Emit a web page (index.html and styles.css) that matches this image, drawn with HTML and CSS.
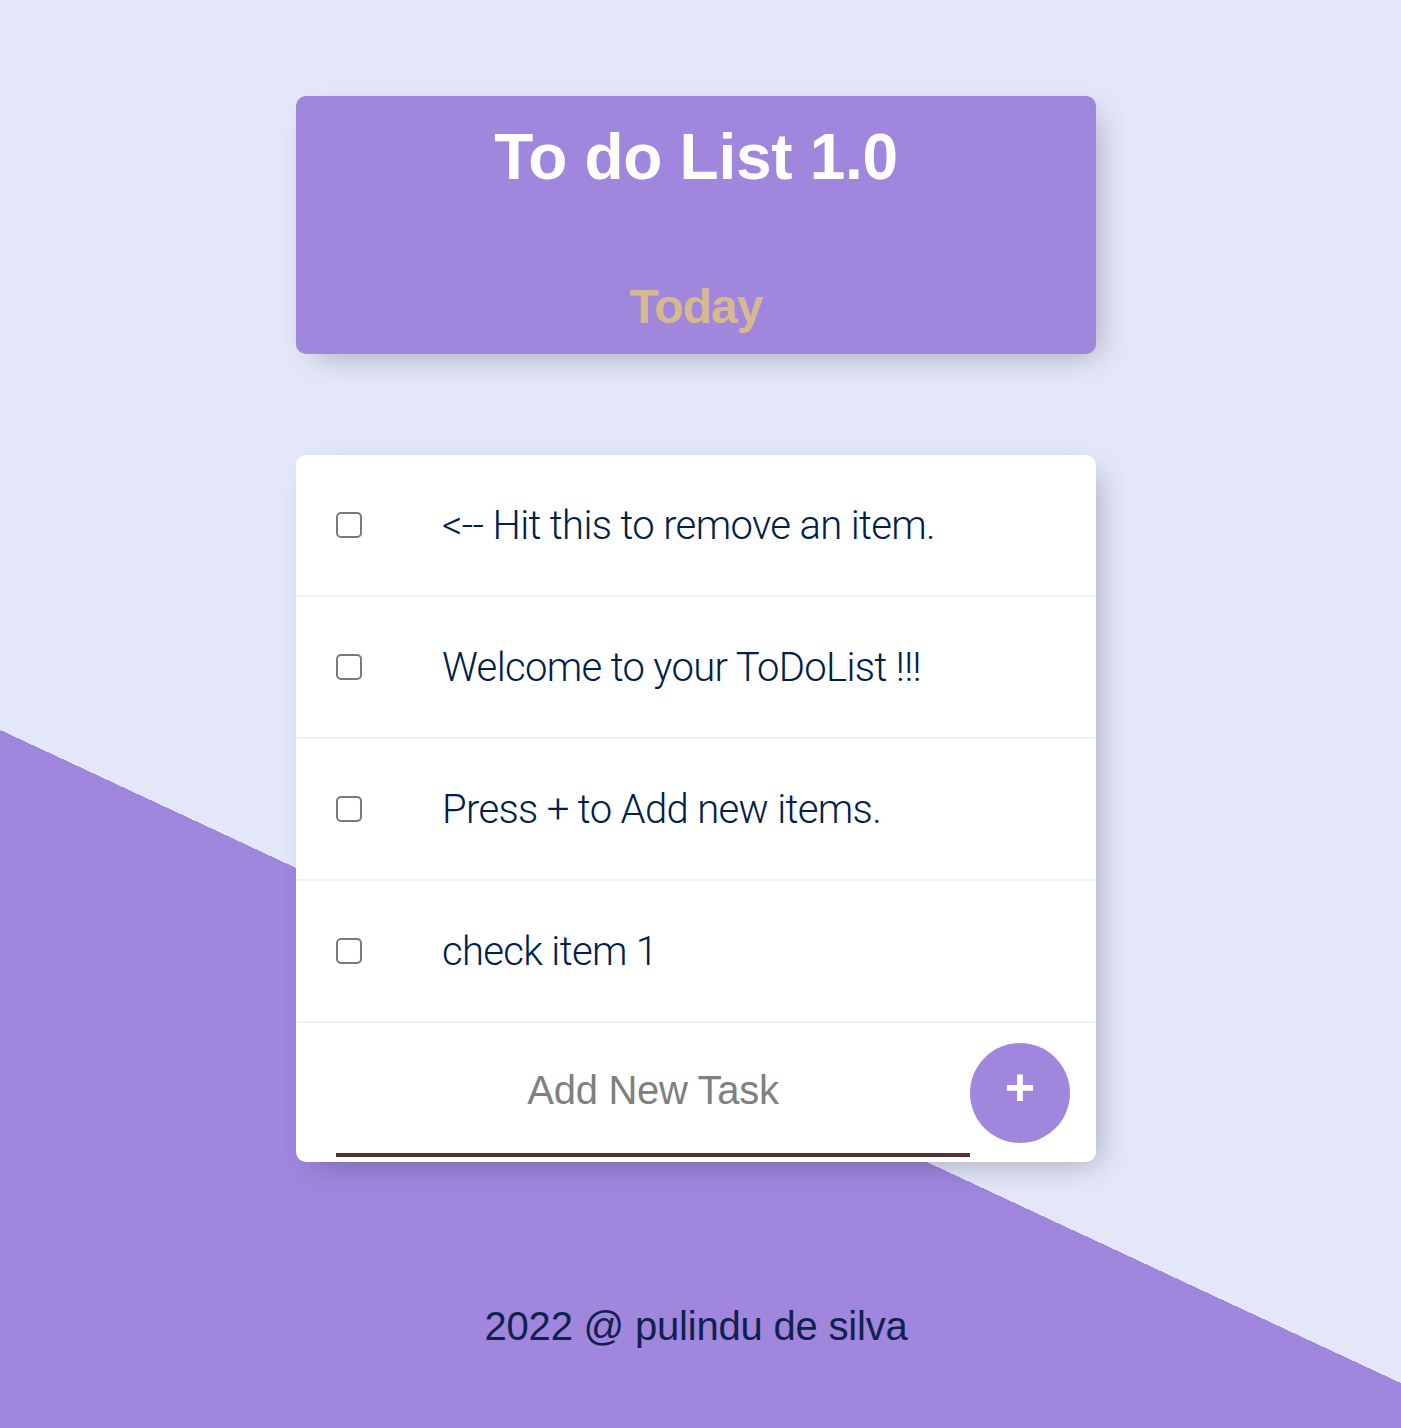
FILE: index.html
```html
<!DOCTYPE html>
<html lang="en">
<head>
<meta charset="utf-8">
<title>To do List</title>
<link rel="stylesheet" href="styles.css">
</head>
<body>
<div class="page">
  <div class="box heading">
    <h1 class="title">To do List 1.0</h1>
    <h1 class="day">Today</h1>
  </div>
  <div class="box list">
    <div class="item"><input type="checkbox" class="check"><p class="text">&lt;-- Hit this to remove an item.</p></div>
    <div class="item"><input type="checkbox" class="check"><p class="text">Welcome to your ToDoList !!!</p></div>
    <div class="item"><input type="checkbox" class="check"><p class="text">Press + to Add new items.</p></div>
    <div class="item"><input type="checkbox" class="check"><p class="text">check item 1</p></div>
    <form class="add">
      <input type="text" class="new" placeholder="Add New Task" autocomplete="off">
      <button type="button" class="plus">+</button>
    </form>
  </div>
  <footer class="foot">2022 @ pulindu de silva</footer>
</div>
</body>
</html>
```

FILE: styles.css
```css
html, body {
  margin: 0;
  padding: 0;
}

body {
  background: #E4E7FA;
}

.page {
  width: 1401px;
  height: 1428px;
  overflow: hidden;
  box-sizing: border-box;
  padding-top: 96px;
  background-color: #E4E7FA;
  background-image: linear-gradient(25deg, #A186DE 50%, #E4E7FA 50%);
  background-size: 1401px 2113px;
  background-repeat: no-repeat;
  font-family: "Liberation Sans", Arial, sans-serif;
}

.box {
  width: 800px;
  margin-left: 296px;
  border-radius: 10px;
  background: #fff;
  box-shadow: 10px 10px 30px -10px rgba(0, 0, 0, 0.3);
}

.heading {
  background: #A186DE;
  height: 258px;
  box-sizing: border-box;
  padding-top: 21px;
  text-align: center;
}

.title {
  margin: 0;
  font-size: 64px;
  line-height: 80px;
  font-weight: 700;
  color: #fff;
  letter-spacing: -0.3px;
}

.day {
  margin: 80px 0 0;
  font-size: 48px;
  line-height: 60px;
  font-weight: 700;
  color: #D6B98E;
  letter-spacing: -1px;
}

.list {
  margin-top: 101px;
}

.item {
  height: 140px;
  display: flex;
  align-items: center;
  border-bottom: 2px solid #F1F1F1;
}

.check {
  -webkit-appearance: none;
  appearance: none;
  width: 26px;
  height: 26px;
  margin: 0 40px;
  box-sizing: border-box;
  border: 2px solid #7A7A7A;
  border-radius: 5px;
  background: #fff;
  flex: none;
}

.text {
  margin: 0;
  padding: 0 40px;
  font-family: Roboto, "Liberation Sans", sans-serif;
  font-weight: 300;
  font-size: 40px;
  letter-spacing: -0.65px;
  color: #00204A;
}

.add {
  height: 139px;
  display: flex;
  align-items: flex-start;
  padding-left: 40px;
  margin: 0;
}

.new {
  width: 634px;
  height: 120px;
  margin-top: 14px;
  box-sizing: border-box;
  padding: 0 0 14px;
  border: none;
  background: transparent;
  box-shadow: inset 0 -4px 0 0 #573431;
  text-align: center;
  font-family: "Liberation Sans", Arial, sans-serif;
  font-size: 40px;
  letter-spacing: -0.3px;
  color: #333;
  outline: none;
}

.new::placeholder {
  color: #808080;
  opacity: 1;
}

.plus {
  width: 100px;
  height: 100px;
  margin-top: 20px;
  border: 0;
  border-radius: 50%;
  background: #A186DE;
  color: #fff;
  font-family: "Liberation Sans", Arial, sans-serif;
  font-size: 52px;
  font-weight: 700;
  line-height: 1;
  padding: 0 0 12px;
  flex: none;
}

.foot {
  width: 800px;
  margin: 140px 0 0 296px;
  text-align: center;
  font-size: 40px;
  line-height: 48px;
  letter-spacing: -0.2px;
  color: #10214E;
}
```
